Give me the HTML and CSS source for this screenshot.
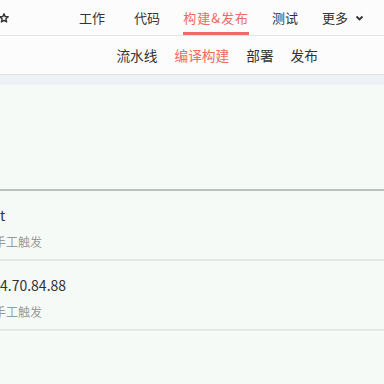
FILE: index.html
```html
<!DOCTYPE html>
<html lang="zh">
<head>
    <meta charset="UTF-8">
    <title>编译构建</title>
    <link rel="stylesheet" href="styles.css">
</head>
<body>
    <header class="topbar">
        <span class="star">
            <svg width="10" height="10" viewBox="0 0 10 10"><polygon points="5,0.8 6.2,3.6 9.2,3.8 6.9,5.8 7.6,8.9 5,7.3 2.4,8.9 3.1,5.8 0.8,3.8 3.8,3.6" fill="none" stroke="#333" stroke-width="1.4" stroke-linejoin="round"/></svg>
        </span>
        <nav class="main-nav">
            <a href="#">工作</a>
            <a href="#">代码</a>
            <a href="#" class="active">构建&amp;发布</a>
            <a href="#">测试</a>
            <a href="#" class="more">更多
                <svg width="9" height="6" viewBox="0 0 9 6"><path d="M1.5 1.5 L4.5 4.5 L7.5 1.5" fill="none" stroke="#333" stroke-width="1.8"/></svg>
            </a>
        </nav>
    </header>

    <nav class="sub-nav">
        <a href="#">流水线</a>
        <a href="#" class="active">编译构建</a>
        <a href="#">部署</a>
        <a href="#">发布</a>
    </nav>
    <div class="band"></div>

    <main class="content">
        <div class="toolbar"></div>
        <ul class="build-list">
            <li class="build">
                <div class="build-name">t</div>
                <div class="build-trigger">手工触发</div>
            </li>
            <li class="build">
                <div class="build-name">4.70.84.88</div>
                <div class="build-trigger">手工触发</div>
            </li>
            <li class="build empty"></li>
        </ul>
    </main>
</body>
</html>
```

FILE: styles.css
```css
html, body {
    margin: 0;
    padding: 0;
    height: 100%;
    overflow: hidden;
}
body {
    font-family: "Noto Sans CJK SC", "Noto Sans", sans-serif;
    color: #333;
    background-color: #f6faf7;
}
a {
    color: #333;
    text-decoration: none;
}
.topbar {
    display: flex;
    align-items: center;
    justify-content: space-between;
    height: 35px;
    background-color: #fbfcfb;
    border-bottom: 1px solid #e3e5e4;
}
.star {
    display: flex;
    margin-left: -1px;
    margin-top: 1px;
}
.main-nav {
    display: flex;
    height: 100%;
    gap: 24px;
    margin-right: 20px;
}
.main-nav a {
    display: flex;
    align-items: center;
    height: 100%;
    box-sizing: border-box;
    font-size: 13px;
    border-bottom: 3px solid transparent;
    padding-top: 3px;
}
.main-nav a:nth-child(2) {
    margin-left: 5px;
}
.main-nav a.active {
    color: #ee6b62;
    border-bottom-color: #ee6b62;
    letter-spacing: 1px;
    margin-left: -1px;
    margin-right: -1px;
}
.main-nav a.more {
    gap: 7px;
}
.sub-nav {
    display: flex;
    justify-content: flex-end;
    align-items: center;
    gap: 17px;
    height: 38px;
    padding-right: 66px;
    background-color: #fbfcfb;
    border-bottom: 1px solid #dfe1e2;
}
.sub-nav a {
    font-size: 13.7px;
}
.sub-nav a.active {
    color: #ee6b62;
}
.band {
    height: 10px;
    background-color: #eef1f6;
}
.toolbar {
    height: 104px;
    border-bottom: 2px solid #bcc2be;
}
.build-list {
    list-style: none;
    margin: 0;
    padding: 0;
}
.build {
    height: 70px;
    padding-top: 13px;
    box-sizing: border-box;
    border-bottom: 2px solid #e3e7e5;
}
.build-name {
    font-size: 14px;
    line-height: 22px;
}
.build-trigger {
    font-size: 12px;
    line-height: 16px;
    margin-top: 8px;
    margin-left: -6px;
    color: #9a9c9b;
}
.build.empty {
    border-bottom: none;
    border-top: 1px solid #fbfdfc;
}
```
